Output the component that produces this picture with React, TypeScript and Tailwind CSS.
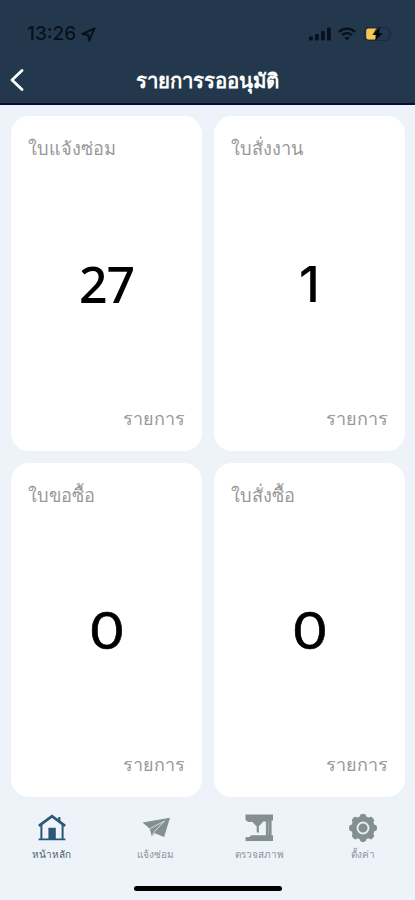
import type { ReactNode } from "react";
import clsx from "clsx";

const cards = [
  { title: "ใบแจ้งซ่อม", count: 27 },
  { title: "ใบสั่งงาน", count: 1 },
  { title: "ใบขอซื้อ", count: 0 },
  { title: "ใบสั่งซื้อ", count: 0 },
];

function HomeIcon() {
  return (
    <svg viewBox="0 0 28 28" className="h-7 w-7" fill="none" stroke="#2b5877">
      <path d="M.9 11.8 14 2.2l13.1 9.6" strokeWidth="2.8" />
      <path d="M21.3 7.5V3" strokeWidth="2.2" />
      <path d="M3.4 10.8V25M24.6 10.8V25" strokeWidth="2" />
      <path d="M.6 25.3h8M8 25.3h19.4" strokeWidth="1.7" />
      <path d="M10.4 13.8h7.4v12.2h-7.4z" fill="#2b5877" stroke="none" />
    </svg>
  );
}

function SendIcon() {
  return (
    <svg viewBox="0 0 28 28" className="h-7 w-7">
      <path d="M28 3.8.4 8.4l7.2 6.2 2.3 8 3-3.4 9.2 3.8z" fill="#848f92" />
      <path d="M8.2 14.6 22.5 7 12.2 17.8l-1.8 4" fill="none" stroke="#d5dde1" strokeWidth="1" />
    </svg>
  );
}

function MachineIcon() {
  return (
    <svg viewBox="0 0 28 28" className="h-7 w-7">
      <path
        d="M.5.5H28v5.9h-1.4v14.8H28V27H.5v-3.7l4-.2 1.8-1.9h14.6V7.6h-2.7l-3.3 3.6-1 .8v6.4h-2.2V12l-1.2-.8-3-3.2H3.2L.5 6z"
        fill="#848f92"
      />
      <path d="M23.4 8.2v12.4" stroke="#aab4b8" strokeWidth="0.8" />
    </svg>
  );
}

function GearIcon() {
  return (
    <svg viewBox="0 0 28 28" className="h-7 w-7">
      <g fill="#848f92">
        <circle cx="14" cy="14" r="11.8" />
        {[0, 45, 90, 135, 180, 225, 270, 315].map((angle) => (
          <rect
            key={angle}
            x="10.8"
            y="0"
            width="6.4"
            height="6"
            rx="2.4"
            transform={`rotate(${angle} 14 14)`}
          />
        ))}
      </g>
      <circle cx="14" cy="14" r="5.5" fill="none" stroke="#e8eef1" strokeWidth="1.9" />
    </svg>
  );
}

const tabs: { label: string; icon: ReactNode; active?: boolean }[] = [
  { label: "หน้าหลัก", icon: <HomeIcon />, active: true },
  { label: "แจ้งซ่อม", icon: <SendIcon /> },
  { label: "ตรวจสภาพ", icon: <MachineIcon /> },
  { label: "ตั้งค่า", icon: <GearIcon /> },
];

function StatusBar() {
  return (
    <div className="flex h-[58px] items-end justify-between pr-[21px] pb-[12px] pl-[27px] text-[#08111b]">
      <div className="flex h-6 items-center gap-[5px]">
        <span className="font-['Inter'] text-[19px] leading-6 font-medium">13:26</span>
        <svg viewBox="0 0 16 16" className="h-[15px] w-[15px]" fill="none" stroke="currentColor" strokeWidth="2.2" strokeLinejoin="round">
          <path d="M14.5 1.5 1.5 7.4l6.2 1 1 6.1z" />
        </svg>
      </div>
      <div className="flex h-6 items-center">
        <svg viewBox="0 0 22 14" className="h-[14px] w-[22px]" fill="currentColor">
          <rect x="0" y="9.5" width="3.8" height="4" rx="1" />
          <rect x="6" y="7" width="3.8" height="6.5" rx="1" />
          <rect x="12" y="4" width="3.8" height="9.5" rx="1" />
          <rect x="18" y="0.5" width="3.8" height="13" rx="1" />
        </svg>
        <svg viewBox="0 0 18 14" className="ml-[7px] h-[14px] w-[18px]" fill="none" stroke="currentColor" strokeWidth="2.2">
          <path d="M1 4.8c4.8-4.2 11.2-4.2 16 0" />
          <path d="M4.2 8.2c2.9-2.5 6.7-2.5 9.6 0" />
          <path d="M6.4 10.7c1.6-1.3 3.6-1.3 5.2 0L9 13.5z" fill="currentColor" stroke="none" />
        </svg>
        <svg viewBox="0 0 30 16" className="ml-[8px] h-4 w-[30px]">
          <rect x="0.8" y="1.5" width="24.5" height="13" rx="4" fill="none" stroke="#192b3d" strokeWidth="1.2" />
          <path d="M27 5.5c1.8.8 1.8 4.2 0 5z" fill="#192b3d" />
          <path d="M4.5 2.5h7.7L8.5 9h3v4.5h-7A2.3 2.3 0 0 1 2.2 11.2V4.8A2.3 2.3 0 0 1 4.5 2.5z" fill="#f5ca4b" />
          <path d="M16.3 1 8.5 9h4l-1.5 6 7.8-8h-4z" fill="#05090f" />
        </svg>
      </div>
    </div>
  );
}

export default function App() {
  return (
    <div className="flex h-[900px] w-[415px] flex-col overflow-hidden bg-[#edf3f8] font-['Noto_Sans','Inter',sans-serif]">
      <header className="h-[105px] shrink-0 border-b-2 border-[#0b0b3c] bg-[#23384c]">
        <StatusBar />
        <div className="grid h-[44px] grid-cols-[50px_1fr_50px] items-center">
          <button className="pl-[10px]" aria-label="back">
            <svg viewBox="0 0 14 22" className="h-[22px] w-[14px]" fill="none" stroke="white" strokeWidth="2.8" strokeLinecap="round" strokeLinejoin="round">
              <path d="M12 1.5 2 11l10 9.5" />
            </svg>
          </button>
          <h1 className="text-center text-[20.4px] font-bold whitespace-nowrap text-white">
            รายการรออนุมัติ
          </h1>
        </div>
      </header>

      <main className="grid h-[692px] shrink-0 grid-cols-2 grid-rows-2 gap-3 pt-[11px] pr-[10px] pl-[11px]">
        {cards.map((card) => (
          <section key={card.title} className="flex flex-col justify-between rounded-[18px] bg-white px-[17px] pt-4 pb-[17px]">
            <h2 className="h-8 text-[18.2px] leading-8 whitespace-nowrap text-[#989898]">{card.title}</h2>
            <p className="pt-0.5 text-center text-[50px] leading-[60px] text-black">
              <span
                className={clsx(
                  "inline-block",
                  card.count === 0 && "scale-x-115 font-['Inter'] font-normal [-webkit-text-stroke:0.6px_black]",
                  card.count === 1 && "font-['Inter'] font-medium",
                  card.count > 1 && "font-['Noto_Sans'] font-medium tracking-[-1px]"
                )}
              >
                {card.count}
              </span>
            </p>
            <p className="h-8 text-right text-[18px] leading-8 text-[#989898]">รายการ</p>
          </section>
        ))}
      </main>

      <nav className="grid h-[90px] shrink-0 grid-cols-4 pt-[17px]">
        {tabs.map((tab) => (
          <div key={tab.label} className="flex flex-col items-center">
            {tab.icon}
            <span className={clsx("mt-[4px] text-[10px] leading-4", tab.active ? "font-medium text-[#4b6070]" : "text-[#8b9499]")}>
              {tab.label}
            </span>
          </div>
        ))}
      </nav>
      <div className="mx-auto h-[5px] w-[148px] shrink-0 -translate-y-px rounded-full bg-black" />
    </div>
  );
}
